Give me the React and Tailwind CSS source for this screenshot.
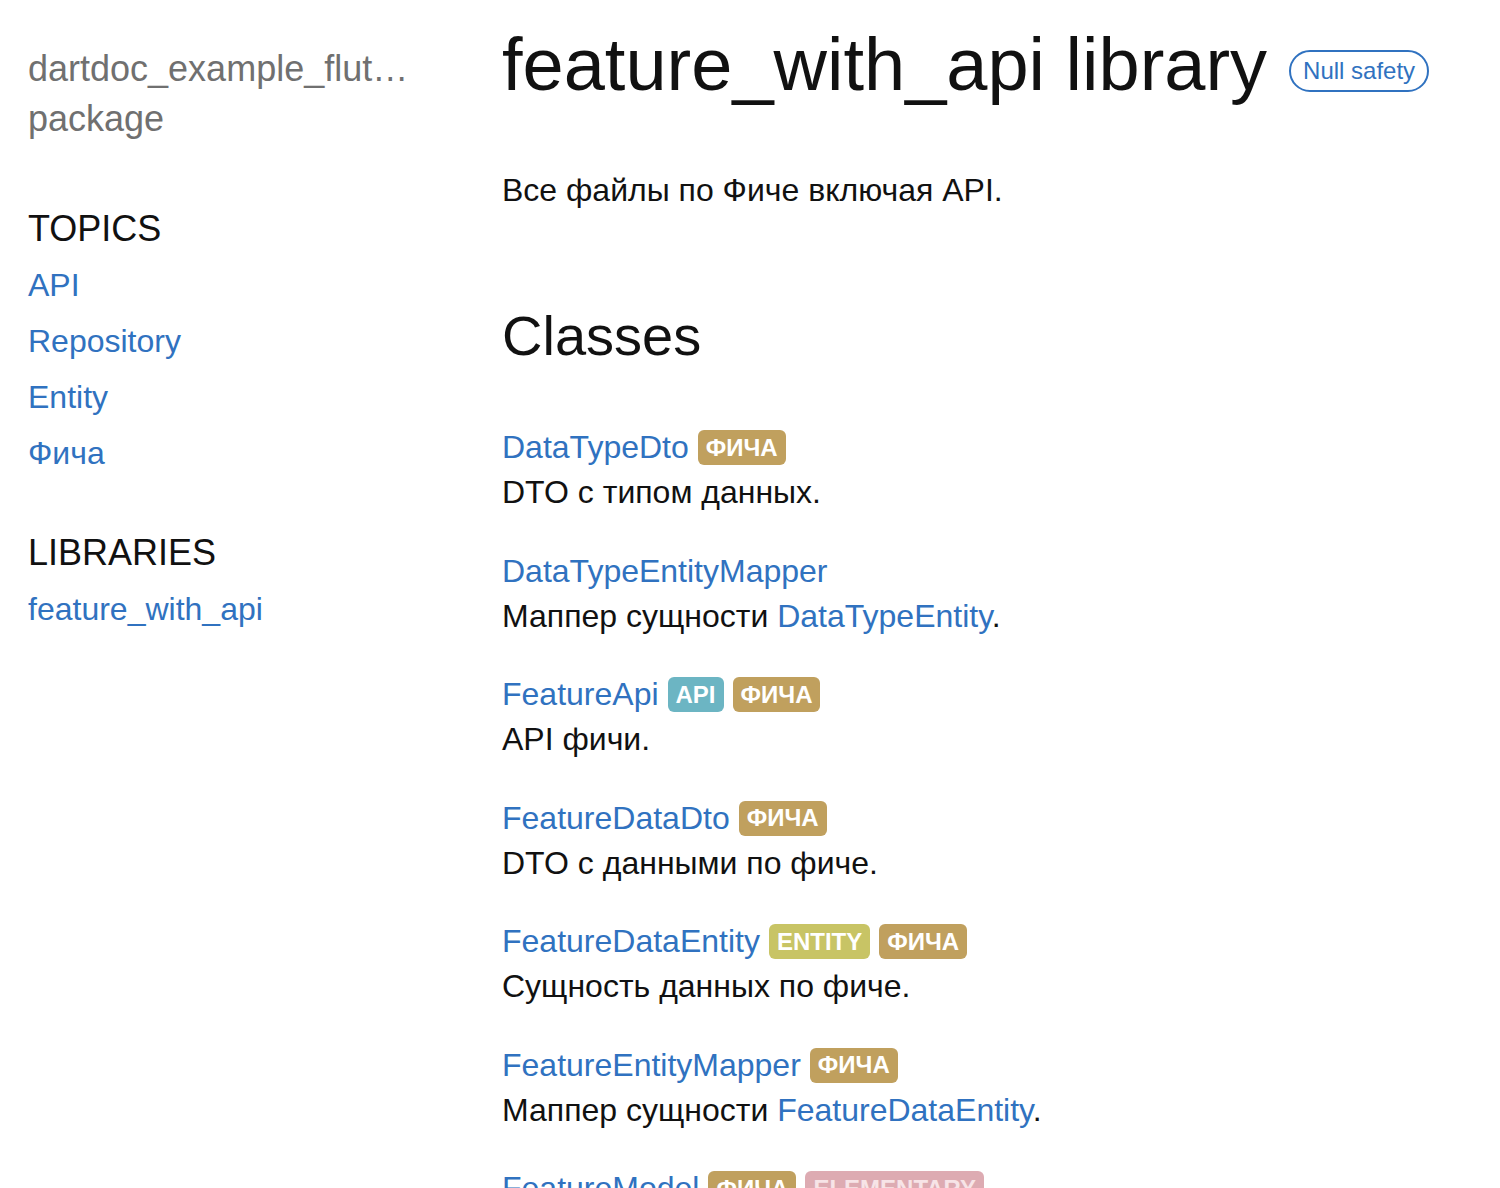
import React from 'react';

const BADGE_STYLES = {
  'ФИЧА': 'bg-[#c0a05e] text-white',
  API: 'bg-[#6cb5c3] text-white',
  ENTITY: 'bg-[#c8c465] text-white',
  ELEMENTARY: 'bg-[#ddabb2] text-[#f7e4e7]',
};

const classes = [
  { name: 'DataTypeDto', tags: ['ФИЧА'], desc: ['DTO с типом данных.'] },
  { name: 'DataTypeEntityMapper', tags: [], desc: ['Маппер сущности ', { link: 'DataTypeEntity' }, '.'] },
  { name: 'FeatureApi', tags: ['API', 'ФИЧА'], desc: ['API фичи.'] },
  { name: 'FeatureDataDto', tags: ['ФИЧА'], desc: ['DTO с данными по фиче.'] },
  { name: 'FeatureDataEntity', tags: ['ENTITY', 'ФИЧА'], desc: ['Сущность данных по фиче.'] },
  { name: 'FeatureEntityMapper', tags: ['ФИЧА'], desc: ['Маппер сущности ', { link: 'FeatureDataEntity' }, '.'] },
  { name: 'FeatureModel', tags: ['ФИЧА', 'ELEMENTARY'], desc: ['Модель фичи.'] },
];

const Badge = ({ label }) => (
  <span
    className={`ml-[9px] inline-flex h-[35px] items-center rounded-[6px] px-[8px] text-[24px] font-bold leading-none ${BADGE_STYLES[label]}`}
  >
    {label}
  </span>
);

const App = () => {
  return (
    <div className="flex min-h-screen bg-white font-['Liberation_Sans',Arial,sans-serif] text-[#111111]">
      {/* sidebar */}
      <aside className="w-[502px] shrink-0 pl-[28px] pr-[92px] pt-[44px]">
        <div className="text-[36px] leading-[50px] text-[#707070]">
          <div className="truncate">dartdoc_example_flutter</div>
          <div>package</div>
        </div>

        <h5 className="mt-[63px] text-[36px] leading-[44px]">TOPICS</h5>
        <ul className="mt-[6px] text-[32px] leading-[56px] text-[#3072c0]">
          <li>API</li>
          <li>Repository</li>
          <li>Entity</li>
          <li>Фича</li>
        </ul>

        <h5 className="mt-[50px] text-[36px] leading-[44px]">LIBRARIES</h5>
        <ul className="mt-[6px] text-[32px] leading-[56px] text-[#3072c0]">
          <li>feature_with_api</li>
        </ul>
      </aside>

      {/* main content */}
      <main className="flex-1 pt-[25px]">
        <div className="flex items-start">
          <h1 className="text-[74px] leading-[80px]">feature_with_api library</h1>
          <span className="ml-[22px] mt-[25px] flex h-[42px] items-center rounded-full border-2 border-[#3072c0] px-[12px] text-[24px] text-[#3072c0]">
            Null safety
          </span>
        </div>

        <p className="mt-[63px] text-[32px] leading-[45px]">Все файлы по Фиче включая API.</p>

        <h2 className="mt-[91px] text-[56px] leading-[64px]">Classes</h2>

        <dl className="mt-[57px]">
          {classes.map((c) => (
            <div key={c.name} className="mb-[33.5px]">
              <dt className="flex items-center text-[32px] leading-[45px] text-[#3072c0]">
                <span>{c.name}</span>
                {c.tags.map((t) => (
                  <Badge key={t} label={t} />
                ))}
              </dt>
              <dd className="text-[32px] leading-[45px]">
                {c.desc.map((part, i) =>
                  typeof part === 'string' ? (
                    <span key={i}>{part}</span>
                  ) : (
                    <span key={i} className="text-[#3072c0]">{part.link}</span>
                  )
                )}
              </dd>
            </div>
          ))}
        </dl>
      </main>
    </div>
  );
};

export default App;
